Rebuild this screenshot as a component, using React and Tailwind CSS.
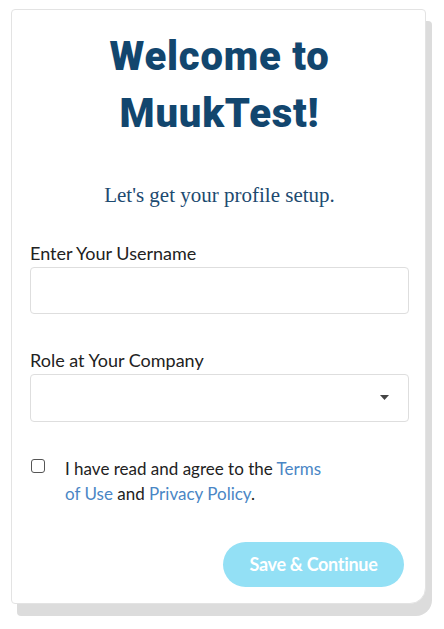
import React, { useState } from 'react';

const App = () => {
  const [username, setUsername] = useState('');
  const [role, setRole] = useState('');
  const [agreed, setAgreed] = useState(false);

  return (
    <div className="min-h-screen bg-white pt-[9px] pl-[11px]">
      <div className="w-[415px] h-[595px] bg-white border border-[#e3e3e3] rounded-[4px] rounded-br-[16px] shadow-[6px_12px_0_0_#dcdcdc] pl-[18px] pr-[16px] pt-[18px] flex flex-col">
        <h1 className="text-center text-[#12466e] text-[40px] leading-[57px] font-black tracking-[0.8px] font-['Roboto',sans-serif]">
          Welcome to
          <br />
          MuukTest!
        </h1>

        <p className="mt-[41px] text-center text-[#1d4a70] text-[21px] leading-[24px] font-['Liberation_Serif',serif]">
          Let's get your profile setup.
        </p>

        <form
          onSubmit={(e) => {
            e.preventDefault();
          }}
          className="flex flex-col font-['Lato',sans-serif]"
        >
          <label htmlFor="username" className="mt-[35px] text-[18px] leading-[22px] text-[#222]">
            Enter Your Username
          </label>
          <input
            id="username"
            value={username}
            onChange={(e) => setUsername(e.target.value)}
            className="mt-[3px] h-[47px] w-full border border-[#dedede] rounded-[4px] px-3 outline-none"
          />

          <label htmlFor="role" className="mt-[35px] text-[18px] leading-[22px] text-[#222]">
            Role at Your Company
          </label>
          <div className="relative mt-[3px]">
            <select
              id="role"
              value={role}
              onChange={(e) => setRole(e.target.value)}
              className="appearance-none h-[48px] w-full border border-[#dedede] rounded-[4px] px-3 outline-none bg-white"
            >
              <option value=""></option>
              <option value="qa">QA Engineer</option>
              <option value="dev">Developer</option>
              <option value="manager">Manager</option>
            </select>
            <svg className="absolute right-[20px] top-[21px] pointer-events-none" width="9" height="5" viewBox="0 0 9 5">
              <path d="M0 0h9L4.5 5z" fill="#444" />
            </svg>
          </div>

          <div className="mt-[34px] flex items-start">
            <input
              type="checkbox"
              checked={agreed}
              onChange={(e) => setAgreed(e.target.checked)}
              className="mt-[3px] ml-[1px] h-[14px] w-[14px] appearance-none border border-[#555] rounded-[3px] bg-white"
            />
            <p className="ml-[20px] w-[270px] text-[17px] leading-[25px] text-[#222]">
              I have read and agree to the <a href="#" className="text-[#4a86c5]">Terms of Use</a> and{' '}
              <a href="#" className="text-[#4a86c5]">Privacy Policy</a>.
            </p>
          </div>

          <div className="mt-[36px] flex justify-end pr-[5px]">
            <button
              type="submit"
              className="h-[45px] w-[181px] rounded-full bg-[#93e0f5] text-white text-[18px] font-bold tracking-[-0.3px]"
            >
              Save &amp; Continue
            </button>
          </div>
        </form>
      </div>
    </div>
  );
};

export default App;
